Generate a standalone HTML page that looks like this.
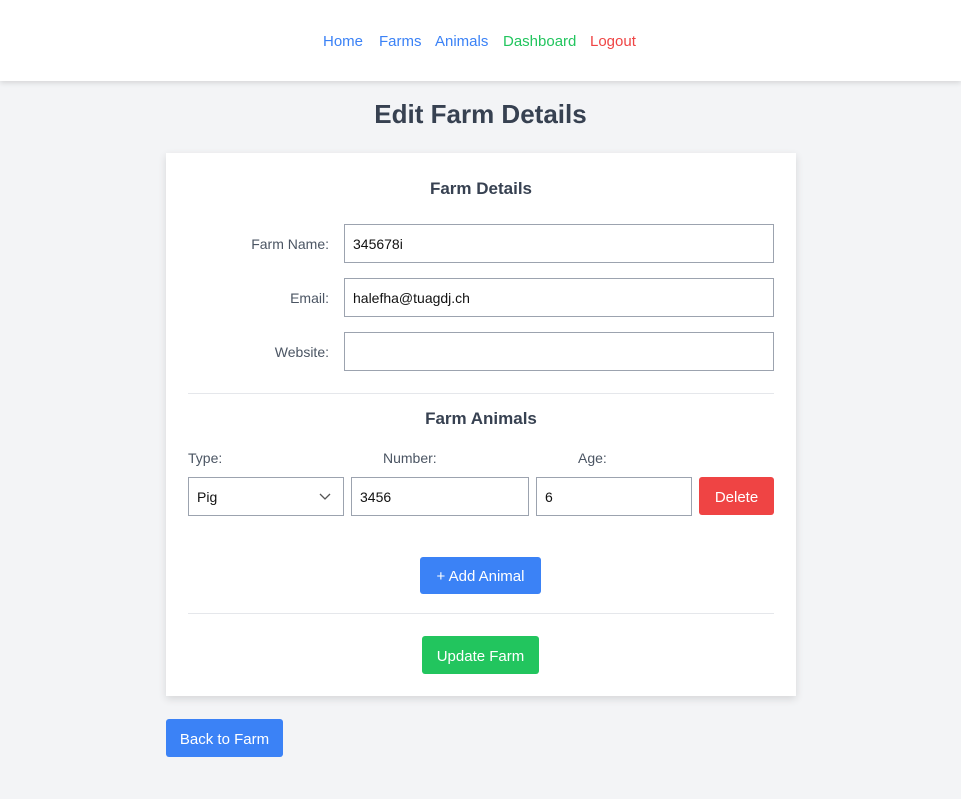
<!DOCTYPE html>
<html><head><style>
*{box-sizing:border-box;margin:0;padding:0}
body{width:961px;height:799px;background:#f3f4f6;font-family:"Liberation Sans",sans-serif;position:relative;overflow:hidden}
.nav{position:absolute;left:0;top:0;width:961px;height:81px;background:#fff;box-shadow:0 2px 5px rgba(0,0,0,.12)}
.nav a{position:absolute;top:33px;font-size:15px;text-decoration:none}
h1{position:absolute;top:99px;width:961px;text-align:center;font-size:26px;color:#374151;font-weight:bold}
.card{position:absolute;left:166px;top:153px;width:630px;height:543px;background:#fff;box-shadow:0 3px 8px rgba(0,0,0,.12)}
h2{position:absolute;width:630px;text-align:center;font-size:17px;color:#374151;font-weight:bold}
.lbl{position:absolute;font-size:14px;color:#4b5563;text-align:right;width:140px}
.in{position:absolute;border:1px solid #9ca3af;background:#fff;font-size:14px;color:#111;padding-left:8px;display:flex;align-items:center}
.hr{position:absolute;left:22px;width:586px;height:1px;background:#e5e7eb}
.btn{position:absolute;color:#fff;font-size:15px;border-radius:3px;display:flex;align-items:center;justify-content:center;padding-top:2px}
.sl{position:absolute;font-size:14px;color:#4b5563}
</style></head><body>
<div class="nav">
<a style="left:323px;color:#3b82f6">Home</a>
<a style="left:379px;color:#3b82f6">Farms</a>
<a style="left:435px;color:#3b82f6">Animals</a>
<a style="left:503px;color:#22c55e">Dashboard</a>
<a style="left:590px;color:#ef4444">Logout</a>
</div>
<h1>Edit Farm Details</h1>
<div class="card">
<h2 style="top:26px">Farm Details</h2>
<div class="lbl" style="left:23px;top:83px">Farm Name:</div>
<div class="in" style="left:178px;top:71px;width:430px;height:39px">345678i</div>
<div class="lbl" style="left:23px;top:137px">Email:</div>
<div class="in" style="left:178px;top:125px;width:430px;height:39px">halefha@tuagdj.ch</div>
<div class="lbl" style="left:23px;top:191px">Website:</div>
<div class="in" style="left:178px;top:179px;width:430px;height:39px"></div>
<div class="hr" style="top:240px"></div>
<h2 style="top:256px">Farm Animals</h2>
<div class="sl" style="left:22px;top:297px">Type:</div>
<div class="sl" style="left:217px;top:297px">Number:</div>
<div class="sl" style="left:412px;top:297px">Age:</div>
<div class="in" style="left:22px;top:324px;width:156px;height:39px">Pig<svg style="position:absolute;right:12px;top:15px" width="12" height="8" viewBox="0 0 12 8"><path d="M1 1l5 5 5-5" stroke="#555" stroke-width="1.3" fill="none"/></svg></div>
<div class="in" style="left:185px;top:324px;width:178px;height:39px">3456</div>
<div class="in" style="left:370px;top:324px;width:156px;height:39px">6</div>
<div class="btn" style="left:533px;top:324px;width:75px;height:38px;background:#ef4444">Delete</div>
<div class="btn" style="left:254px;top:404px;width:121px;height:37px;background:#3b82f6">+ Add Animal</div>
<div class="hr" style="top:460px"></div>
<div class="btn" style="left:256px;top:483px;width:117px;height:38px;background:#22c55e">Update Farm</div>
</div>
<div class="btn" style="left:166px;top:719px;width:117px;height:38px;background:#3b82f6">Back to Farm</div>
</body></html>
